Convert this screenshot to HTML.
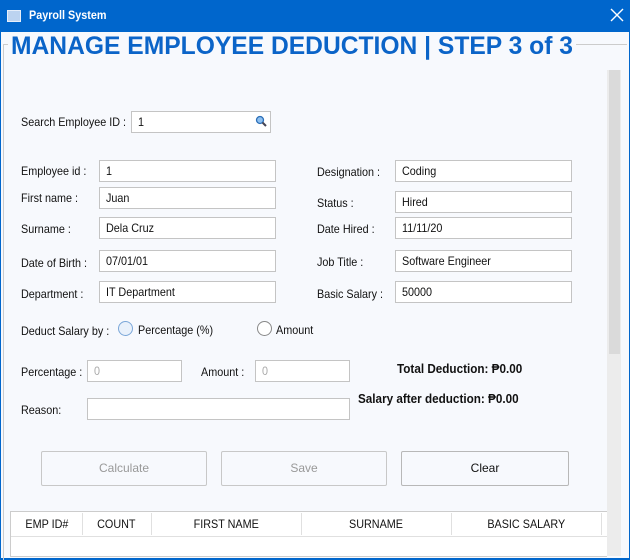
<!DOCTYPE html>
<html><head><style>
*{margin:0;padding:0;box-sizing:border-box}
body{width:630px;height:560px;overflow:hidden;background:#f7f9fd;font-family:"Liberation Sans",sans-serif;font-size:12px;color:#111;position:relative}
.a{position:absolute;white-space:nowrap}
.t{position:absolute;white-space:nowrap;transform:scaleX(.9);transform-origin:left center}
.in{position:absolute;background:#fff;border:1px solid #c4c4c4;height:22px;padding:3px 6px;font-size:12px}
.in span{display:inline-block;transform:scaleX(.9);transform-origin:left}
.btn{position:absolute;border:1px solid #c8c8c8;border-radius:2px;background:#f7f9fd;text-align:center;line-height:33px;height:35px;color:#999}
.th{position:absolute;top:517px;text-align:center;white-space:nowrap}
.th span{display:inline-block;transform:scaleX(.9)}
</style></head><body>
<div class="a" style="left:0;top:0;width:630px;height:32px;background:#0066cc"></div>
<div class="a" style="left:0;top:0;width:1px;height:560px;background:#0066cc"></div>
<div class="a" style="right:0;top:0;width:1px;height:560px;background:#0066cc"></div>
<div class="a" style="left:0;bottom:0;width:630px;height:2px;background:#0066cc"></div>
<div class="a" style="left:7px;top:10px;width:14px;height:12px;background:#bcd3f0;border:1px solid #e6eefa"></div>
<div class="t" style="left:29px;top:8px;color:#fff;font-weight:bold;font-size:12px">Payroll System</div>
<svg class="a" style="left:610px;top:8px" width="14" height="14"><path d="M1 1L13 13M13 1L1 13" stroke="#fff" stroke-width="1.4"/></svg>
<div class="a" style="left:3px;top:44px;width:624px;height:1px;background:#ccc"></div>
<div class="a" style="left:3px;top:44px;width:1px;height:516px;background:#ccc"></div>
<div class="a" style="left:8px;top:32px;height:28px;width:568px;background:#f7f9fd;padding:0 3px"><div class="t" style="position:relative;font-weight:bold;font-size:25px;color:#0b64c8;transform:scaleX(.985);line-height:28px">MANAGE EMPLOYEE DEDUCTION | STEP 3 of 3</div></div>
<div class="a" style="left:607px;top:70px;width:14px;height:486px;background:#ececec"></div>
<div class="a" style="left:609px;top:70px;width:11px;height:284px;background:#dadada"></div>

<div class="t" style="left:21px;top:115px">Search Employee ID :</div>
<div class="in" style="left:131px;top:111px;width:140px"><span>1</span>
<svg style="position:absolute;right:3px;top:3px" width="12" height="12"><circle cx="5" cy="5" r="3.5" fill="#8ec0f0" stroke="#2c6fb8" stroke-width="1.3"/><path d="M7.5 7.5L11 11" stroke="#445" stroke-width="2"/></svg></div>

<div class="t" style="left:21px;top:164px">Employee id :</div>
<div class="in" style="left:99px;top:160px;width:177px"><span>1</span></div>
<div class="t" style="left:21px;top:191px">First name :</div>
<div class="in" style="left:99px;top:187px;width:177px"><span>Juan</span></div>
<div class="t" style="left:21px;top:222px">Surname :</div>
<div class="in" style="left:99px;top:217px;width:177px"><span>Dela Cruz</span></div>
<div class="t" style="left:21px;top:256px">Date of Birth :</div>
<div class="in" style="left:99px;top:250px;width:177px"><span>07/01/01</span></div>
<div class="t" style="left:21px;top:287px">Department :</div>
<div class="in" style="left:99px;top:281px;width:177px"><span>IT Department</span></div>

<div class="t" style="left:317px;top:165px">Designation :</div>
<div class="in" style="left:395px;top:160px;width:177px"><span>Coding</span></div>
<div class="t" style="left:317px;top:196px">Status :</div>
<div class="in" style="left:395px;top:191px;width:177px"><span>Hired</span></div>
<div class="t" style="left:317px;top:222px">Date Hired :</div>
<div class="in" style="left:395px;top:217px;width:177px"><span>11/11/20</span></div>
<div class="t" style="left:317px;top:255px">Job Title :</div>
<div class="in" style="left:395px;top:250px;width:177px"><span>Software Engineer</span></div>
<div class="t" style="left:317px;top:287px">Basic Salary :</div>
<div class="in" style="left:395px;top:281px;width:177px"><span>50000</span></div>

<div class="t" style="left:21px;top:324px">Deduct Salary by :</div>
<div class="a" style="left:118px;top:321px;width:15px;height:15px;border-radius:50%;border:1px solid #7aa6d8;background:#e9f1fb"></div>
<div class="t" style="left:138px;top:323px">Percentage (%)</div>
<div class="a" style="left:257px;top:321px;width:15px;height:15px;border-radius:50%;border:1px solid #888;background:#fff"></div>
<div class="t" style="left:276px;top:323px">Amount</div>

<div class="t" style="left:21px;top:365px">Percentage :</div>
<div class="in" style="left:87px;top:360px;width:95px;color:#aaa"><span>0</span></div>
<div class="t" style="left:201px;top:365px">Amount :</div>
<div class="in" style="left:255px;top:360px;width:95px;color:#aaa"><span>0</span></div>
<div class="t" style="left:397px;top:361px;font-weight:bold;font-size:13px">Total Deduction: ₱0.00</div>
<div class="t" style="left:358px;top:391px;font-weight:bold;font-size:13px">Salary after deduction: ₱0.00</div>
<div class="t" style="left:21px;top:403px">Reason:</div>
<div class="in" style="left:87px;top:398px;width:263px"></div>

<div class="btn" style="left:41px;top:451px;width:166px">Calculate</div>
<div class="btn" style="left:221px;top:451px;width:166px">Save</div>
<div class="btn" style="left:401px;top:451px;width:168px;color:#111;border-color:#b8b8b8">Clear</div>

<div class="a" style="left:10px;top:511px;width:597px;height:46px;background:#fff;border:1px solid #ccc;border-right:none"></div>
<div class="a" style="left:11px;top:536px;width:596px;height:1px;background:#e0e0e0"></div>
<div class="a" style="left:82px;top:513px;width:1px;height:22px;background:#e0e0e0"></div>
<div class="a" style="left:151px;top:513px;width:1px;height:22px;background:#e0e0e0"></div>
<div class="a" style="left:301px;top:513px;width:1px;height:22px;background:#e0e0e0"></div>
<div class="a" style="left:451px;top:513px;width:1px;height:22px;background:#e0e0e0"></div>
<div class="a" style="left:601px;top:513px;width:1px;height:22px;background:#e0e0e0"></div>
<div class="th" style="left:11px;width:71px"><span>EMP ID#</span></div>
<div class="th" style="left:82px;width:69px"><span>COUNT</span></div>
<div class="th" style="left:151px;width:150px"><span>FIRST NAME</span></div>
<div class="th" style="left:301px;width:150px"><span>SURNAME</span></div>
<div class="th" style="left:451px;width:150px"><span>BASIC SALARY</span></div>
</body></html>
